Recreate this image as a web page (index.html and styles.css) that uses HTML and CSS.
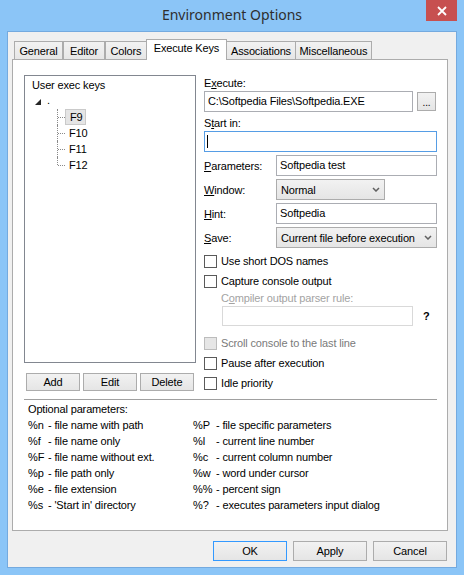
FILE: index.html
```html
<!DOCTYPE html>
<html>
<head>
<meta charset="utf-8">
<link rel="stylesheet" href="styles.css">
</head>
<body>
<div class="window">
  <div class="titlebar">
    <div class="title">Environment Options</div>
    <div class="close"><svg width="10" height="10" viewBox="0 0 10 10"><path d="M1 1 L9 9 M9 1 L1 9" stroke="#fff" stroke-width="1.8" fill="none"/></svg></div>
  </div>
  <div class="client">
    <div class="tabs">
      <div class="tab t-general">General</div>
      <div class="tab t-editor">Editor</div>
      <div class="tab t-colors">Colors</div>
      <div class="tab tab-active t-exec">Execute Keys</div>
      <div class="tab t-assoc">Associations</div>
      <div class="tab t-misc">Miscellaneous</div>
    </div>
    <div class="page">
      <div class="top">
        <div class="left">
          <div class="tree">
            <div class="tree-row">User exec keys</div>
            <div class="tree-row root"><svg class="tri" width="6" height="6" viewBox="0 0 6 6"><polygon points="0,6 6,6 6,0" fill="#262626"/></svg><span class="root-label">.</span></div>
            <div class="children">
              <div class="item"><span class="sel">F9</span></div>
              <div class="item"><span class="lab">F10</span></div>
              <div class="item"><span class="lab">F11</span></div>
              <div class="item last"><span class="lab">F12</span></div>
            </div>
          </div>
          <div class="btn-row">
            <div class="btn">Add</div>
            <div class="btn">Edit</div>
            <div class="btn">Delete</div>
          </div>
        </div>
        <div class="right">
          <div class="lbl">E<u>x</u>ecute:</div>
          <div class="exec-row">
            <div class="field exec-field">C:\Softpedia Files\Softpedia.EXE</div>
            <div class="dots">...</div>
          </div>
          <div class="lbl start-lbl">S<u>t</u>art in:</div>
          <div class="field focus"><span class="caret"></span></div>
          <div class="row first-row">
            <div class="rlbl"><u>P</u>arameters:</div>
            <div class="field grow">Softpedia test</div>
          </div>
          <div class="row">
            <div class="rlbl"><u>W</u>indow:</div>
            <div class="select win-select"><span>Normal</span><svg width="8" height="5" viewBox="0 0 8 5"><path d="M1 1 L4 4 L7 1" stroke="#606060" stroke-width="1.5" fill="none"/></svg></div>
          </div>
          <div class="row">
            <div class="rlbl"><u>H</u>int:</div>
            <div class="field grow">Softpedia</div>
          </div>
          <div class="row">
            <div class="rlbl"><u>S</u>ave:</div>
            <div class="select grow"><span>Current file before execution</span><svg width="8" height="5" viewBox="0 0 8 5"><path d="M1 1 L4 4 L7 1" stroke="#606060" stroke-width="1.5" fill="none"/></svg></div>
          </div>
          <div class="check first-check"><span class="box"></span>Use short DOS names</div>
          <div class="check"><span class="box"></span>Capture console output</div>
          <div class="lbl comp-lbl">C<u>o</u>mpiler output parser rule:</div>
          <div class="comp-row">
            <div class="comp-field"></div>
            <div class="qmark">?</div>
          </div>
          <div class="check disabled scroll-check"><span class="box"></span>Scroll console to the last line</div>
          <div class="check"><span class="box"></span>Pause after execution</div>
          <div class="check"><span class="box"></span>Idle priority</div>
        </div>
      </div>
      <div class="sep"></div>
      <div class="params">
        <div class="params-title">Optional parameters:</div>
        <div class="pgrid">
          <div class="p pl"><span class="code">%n</span><span>- file name with path</span></div>
          <div class="p pr"><span class="code">%P</span><span>- file specific parameters</span></div>
          <div class="p pl"><span class="code">%f</span><span>- file name only</span></div>
          <div class="p pr"><span class="code">%l</span><span>- current line number</span></div>
          <div class="p pl"><span class="code">%F</span><span>- file name without ext.</span></div>
          <div class="p pr"><span class="code">%c</span><span>- current column number</span></div>
          <div class="p pl"><span class="code">%p</span><span>- file path only</span></div>
          <div class="p pr"><span class="code">%w</span><span>- word under cursor</span></div>
          <div class="p pl"><span class="code">%e</span><span>- file extension</span></div>
          <div class="p pr"><span class="code">%%</span><span>- percent sign</span></div>
          <div class="p pl"><span class="code">%s</span><span>- 'Start in' directory</span></div>
          <div class="p pr"><span class="code">%?</span><span>- executes parameters input dialog</span></div>
        </div>
      </div>
    </div>
    <div class="bottom">
      <div class="btn big ok">OK</div>
      <div class="btn big">Apply</div>
      <div class="btn big">Cancel</div>
    </div>
  </div>
</div>
</body>
</html>
```
FILE: styles.css
```css
* { box-sizing: border-box; }
html, body { margin: 0; padding: 0; }
body {
  width: 464px; height: 575px; overflow: hidden;
  font-family: "Liberation Sans", Arial, sans-serif;
  font-size: 11px; color: #000; letter-spacing: -0.15px;
}
u { text-decoration: underline; text-underline-offset: 1px; }
.window {
  width: 464px; height: 575px; background: #8bc5f7;
  padding: 0 7px 7px; display: flex; flex-direction: column;
}
.titlebar { height: 31px; display: flex; margin: 0 -7px; flex: none; }
.title {
  flex: 1; padding-left: 38px; text-align: center;
  font-family: "Noto Sans", sans-serif; font-size: 14px; letter-spacing: 0;
  line-height: 30px; color: #2e2e2e;
}
.close {
  width: 31px; height: 21px; margin-right: 7px; background: #c75050;
  display: flex; align-items: center; justify-content: center;
}
.client {
  flex: 1; background: #f0f0f0; border: 1px solid #74aadf;
  display: flex; flex-direction: column; padding: 7px 8px 0 4px;
}
.tabs { display: flex; align-items: flex-end; height: 20px; padding-left: 2px; flex: none; }
.tab {
  height: 18px; border: 1px solid #acacac; border-bottom: none;
  background: linear-gradient(#f2f2f2, #e6e6e6);
  line-height: 19px; text-align: center; white-space: nowrap;
}
.t-general { width: 49px; }
.t-editor { width: 42px; }
.t-colors { width: 42px; }
.t-exec { width: 81px; margin-left: -1px; }
.t-assoc { width: 70px; margin-left: -1px; }
.t-misc { width: 77px; margin-left: -1px; }
.tab-active {
  height: 21px; margin-bottom: -1px; background: #fff;
  position: relative; z-index: 1; line-height: 17px;
}
.page {
  height: 472px; width: 436px; border: 1px solid #acacac; background: #fff;
  padding: 15px 10px 0 11px; display: flex; flex-direction: column; flex: none;
}
.top { display: flex; gap: 8px; height: 324px; flex: none; }
.left { width: 172px; display: flex; flex-direction: column; }
.tree { height: 288px; border: 1px solid #828790; padding: 1px 0 0 7px; }
.tree-row { height: 16px; line-height: 16px; display: flex; align-items: center; }
.root { padding-left: 3px; }
.tri { margin-top: 1px; }
.root-label { margin-left: 6px; line-height: 16px; margin-top: -3px; }
.children { margin-left: 25px; }
.item { height: 16px; position: relative; padding-left: 8px; display: flex; align-items: center; }
.item::before {
  content: ""; position: absolute; left: 0; top: 0; bottom: 0;
  border-left: 1px dotted #8a8a8a;
}
.item.last::before { bottom: 8px; }
.item::after {
  content: ""; position: absolute; left: 1px; top: 8px; width: 7px;
  border-top: 1px dotted #8a8a8a;
}
.sel {
  background: #e5e5e5; border: 1px solid #cacaca; height: 16px;
  line-height: 14px; padding: 0 4px 0 4px; width: 21px;
}
.lab { padding-left: 4px; }
.btn-row { display: flex; gap: 3px; margin-top: 10px; padding-left: 2px; }
.btn {
  width: 54px; height: 18px; border: 1px solid #acacac;
  background: linear-gradient(#f2f2f2, #e5e5e5);
  text-align: center; line-height: 16px;
}
.right { width: 233px; padding-top: 1px; display: flex; flex-direction: column; }
.lbl { height: 15px; line-height: 15px; white-space: nowrap; }
.field {
  height: 21px; border: 1px solid #abadb3; background: #fff;
  padding: 0 3px; line-height: 19px; white-space: nowrap; overflow: hidden;
}
.exec-row { display: flex; gap: 4px; align-items: flex-start; }
.exec-field { width: 209px; }
.dots {
  width: 19px; height: 19px; margin-top: 1px; border: 1px solid #acacac;
  background: linear-gradient(#f2f2f2, #e5e5e5); text-align: center;
  line-height: 19px; font-size: 10px;
}
.start-lbl { margin-top: 4px; }
.focus { border-color: #569de5; display: flex; align-items: center; padding-left: 2px; }
.caret { width: 1px; height: 13px; background: #000; }
.row { display: flex; height: 21px; margin-top: 3px; align-items: center; }
.rlbl { width: 72px; flex: none; white-space: nowrap; }
.grow { flex: 1; }
.select {
  height: 21px; border: 1px solid #acacac;
  background: linear-gradient(#f2f2f2, #e5e5e5);
  display: flex; align-items: center; justify-content: space-between;
  padding: 0 4px 0 4px; white-space: nowrap;
}
.win-select { width: 109px; }
.check { display: flex; align-items: center; height: 20px; white-space: nowrap; }
.first-check { margin-top: 3px; }
.box { width: 13px; height: 13px; border: 1px solid #5a5a5a; background: #fff; margin-right: 4px; flex: none; }
.comp-lbl { padding-left: 17px; color: #a3a3a3; }
.comp-row { display: flex; align-items: center; height: 20px; padding-left: 18px; }
.comp-field { width: 191px; height: 20px; border: 1px solid #d9d9d9; background: #fff; }
.qmark { margin-left: 10px; font-weight: bold; }
.scroll-check { margin-top: 7px; }
.disabled { color: #7a7a7a; }
.disabled .box { background: #e6e6e6; border-color: #bcbcbc; }
.sep { height: 1px; background: #a0a0a0; flex: none; }
.params { margin-top: 1px; padding-left: 4px; line-height: 16px; }
.pgrid { display: grid; grid-template-columns: 165px auto; }
.p { display: flex; white-space: nowrap; }
.pl .code { width: 20px; flex: none; }
.pr .code { width: 23px; flex: none; }
.bottom {
  display: flex; justify-content: flex-end; gap: 6px;
  margin-top: 10px; margin-right: 1px;
}
.big { width: 74px; height: 20px; line-height: 18px; }
.ok { border-color: #3399ff; }
```
